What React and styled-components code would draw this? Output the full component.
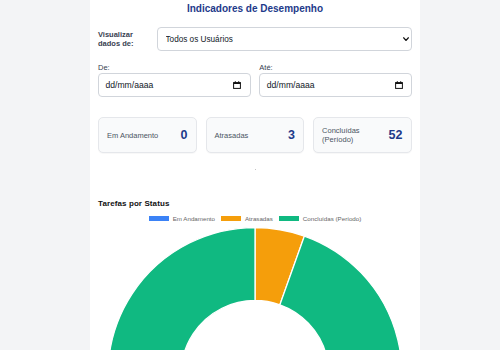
import React from "react";
import styled, { createGlobalStyle } from "styled-components";

const GlobalStyle = createGlobalStyle`
  html, body {
    margin: 0;
    padding: 0;
    background: #f3f4f6;
    overflow: hidden;
    font-family: "Liberation Sans", Arial, sans-serif;
  }
  * { box-sizing: border-box; }
`;

const Page = styled.div`
  display: flex;
  padding-left: 90px;
`;

const Panel = styled.div`
  width: 330px;
  min-height: 350px;
  background: #ffffff;
  padding: 3px 8px 0;
  display: flex;
  flex-direction: column;
`;

const Title = styled.h2`
  margin: 0;
  font-size: 10px;
  line-height: 11px;
  font-weight: 700;
  text-align: center;
  color: #1e3a8a;
`;

const FilterRow = styled.div`
  display: grid;
  grid-template-columns: 58.5px 1fr;
  align-items: center;
  margin-top: 13.3px;
`;

const FieldLabel = styled.label`
  display: block;
  font-size: 7.5px;
  line-height: 9px;
  font-weight: ${(p) => (p.$bold ? 700 : 400)};
  color: #374151;
`;

const SelectWrap = styled.div`
  position: relative;
`;

const Select = styled.select`
  appearance: none;
  width: 100%;
  height: 23.5px;
  border: 1px solid #d1d5db;
  border-radius: 4px;
  background: #fff;
  padding: 0 16px 0 8px;
  font-family: "Liberation Sans", Arial, sans-serif;
  font-size: 8.2px;
  color: #111827;
  outline: none;
`;

const Chevron = styled.svg`
  position: absolute;
  right: 3.5px;
  top: 10px;
  pointer-events: none;
`;

const DateRow = styled.div`
  display: grid;
  grid-template-columns: 1fr 1fr;
  column-gap: 8.6px;
  margin-top: 12.5px;
`;

const DateField = styled.div`
  display: flex;
  flex-direction: column;
  gap: 0.7px;
`;

const DateBox = styled.div`
  height: 24px;
  border: 1px solid #d1d5db;
  border-radius: 4px;
  display: flex;
  align-items: center;
  justify-content: space-between;
  padding: 0 8.5px 0 6.5px;
  font-size: 8.6px;
  color: #111827;
`;

const Stats = styled.div`
  display: grid;
  grid-template-columns: repeat(3, 1fr);
  gap: 8.6px;
  margin-top: 20.5px;
`;

const StatCard = styled.div`
  height: 35.5px;
  background: #f9fafb;
  border: 1px solid #e5e7eb;
  border-radius: 5px;
  box-shadow: 0 1px 1px rgba(0, 0, 0, 0.03);
  display: flex;
  align-items: center;
  justify-content: space-between;
  padding: 0 8.5px 0 8px;
`;

const StatLabel = styled.span`
  font-size: 7.5px;
  line-height: 9.3px;
  color: #4b5563;
  max-width: 58px;
`;

const StatValue = styled.span`
  font-size: 12.5px;
  font-weight: 700;
  color: #1e3a8a;
`;

const Spinner = styled.div`
  align-self: center;
  width: 1px;
  height: 1px;
  margin-top: 16.5px;
  background: #c4c4c4;
`;

const ChartTitle = styled.h3`
  margin: 28.5px 0 0;
  font-size: 8px;
  line-height: 10px;
  font-weight: 700;
  color: #111111;
  letter-spacing: 0.1px;
`;

const Legend = styled.div`
  display: flex;
  justify-content: center;
  align-items: center;
  gap: 6px;
  margin-top: 6px;
  height: 8px;
`;

const LegendItem = styled.div`
  display: flex;
  align-items: center;
  gap: 4px;
  font-size: 6.2px;
  color: #666666;
`;

const Swatch = styled.span`
  width: 20px;
  height: 5px;
  background: ${(p) => p.$color};
`;

const ChartArea = styled.div`
  margin-top: 4px;
  display: flex;
  justify-content: center;
`;

const statuses = [
  { label: "Em Andamento", value: 0, color: "#3b82f6" },
  { label: "Atrasadas", value: 3, color: "#f59e0b" },
  { label: "Concluídas (Período)", value: 52, color: "#10b981" },
];

// annular sector, angles in degrees clockwise from the top
const arcPath = (cx, cy, R, r, a0, a1) => {
  const pt = (rad, a) => [
    cx + rad * Math.sin((a * Math.PI) / 180),
    cy - rad * Math.cos((a * Math.PI) / 180),
  ];
  const large = a1 - a0 > 180 ? 1 : 0;
  const [x0, y0] = pt(R, a0);
  const [x1, y1] = pt(R, a1);
  const [x2, y2] = pt(r, a1);
  const [x3, y3] = pt(r, a0);
  return `M${x0} ${y0} A${R} ${R} 0 ${large} 1 ${x1} ${y1} L${x2} ${y2} A${r} ${r} 0 ${large} 0 ${x3} ${y3} Z`;
};

const Doughnut = ({ data }) => {
  const total = data.reduce((s, d) => s + d.value, 0);
  let start = 0;
  const slices = data
    .map((d) => {
      const sweep = (d.value / total) * 360;
      const slice = { ...d, a0: start, a1: start + sweep };
      start += sweep;
      return slice;
    })
    .filter((s) => s.value > 0);

  return (
    <svg width="314" height="128" viewBox="0 0 314 128">
      {slices.map((s) => (
        <path
          key={s.label}
          d={arcPath(157, 147.5, 147, 74, s.a0, s.a1)}
          fill={s.color}
          stroke="#ffffff"
          strokeWidth="1.3"
        />
      ))}
    </svg>
  );
};

const CalendarIcon = () => (
  <svg width="8" height="8" viewBox="0 0 8 8">
    <rect x="0.6" y="1.6" width="6.8" height="5.8" fill="none" stroke="#111" strokeWidth="1" />
    <rect x="0.6" y="1.6" width="6.8" height="1.4" fill="#111" />
    <rect x="1.8" y="0.2" width="1" height="1.6" fill="#111" />
    <rect x="5.2" y="0.2" width="1" height="1.6" fill="#111" />
  </svg>
);

const App = () => {
  return (
    <>
      <GlobalStyle />
      <Page>
        <Panel>
          <Title>Indicadores de Desempenho</Title>

          <FilterRow>
            <FieldLabel $bold htmlFor="user">
              Visualizar
              <br />
              dados de:
            </FieldLabel>
            <SelectWrap>
              <Select id="user" defaultValue="all">
                <option value="all">Todos os Usuários</option>
              </Select>
              <Chevron width="6" height="4" viewBox="0 0 6 4">
                <path d="M0.3 0.4 L3 3.4 L5.7 0.4" fill="none" stroke="#111" strokeWidth="1.3" />
              </Chevron>
            </SelectWrap>
          </FilterRow>

          <DateRow>
            <DateField>
              <FieldLabel>De:</FieldLabel>
              <DateBox>
                <span>dd/mm/aaaa</span>
                <CalendarIcon />
              </DateBox>
            </DateField>
            <DateField>
              <FieldLabel>Até:</FieldLabel>
              <DateBox>
                <span>dd/mm/aaaa</span>
                <CalendarIcon />
              </DateBox>
            </DateField>
          </DateRow>

          <Stats>
            {statuses.map((s) => (
              <StatCard key={s.label}>
                <StatLabel>{s.label}</StatLabel>
                <StatValue>{s.value}</StatValue>
              </StatCard>
            ))}
          </Stats>

          <Spinner />

          <ChartTitle>Tarefas por Status</ChartTitle>
          <Legend>
            {statuses.map((s) => (
              <LegendItem key={s.label}>
                <Swatch $color={s.color} />
                {s.label}
              </LegendItem>
            ))}
          </Legend>
          <ChartArea>
            <Doughnut data={statuses} />
          </ChartArea>
        </Panel>
      </Page>
    </>
  );
};

export default App;
